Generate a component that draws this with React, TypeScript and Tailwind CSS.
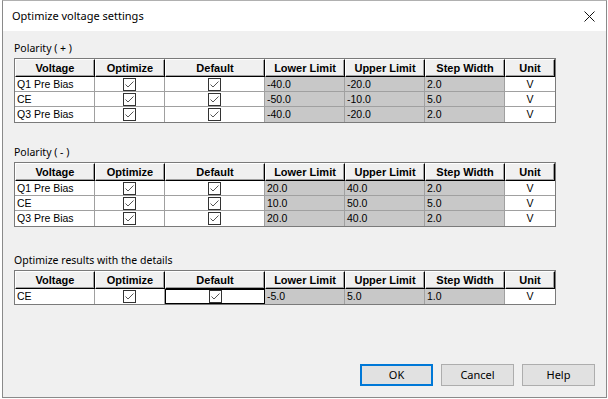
import React from "react";

type Row = { name: string; lower: string; upper: string; step: string; editing?: boolean };

const positive: Row[] = [
  { name: "Q1 Pre Bias", lower: "-40.0", upper: "-20.0", step: "2.0" },
  { name: "CE", lower: "-50.0", upper: "-10.0", step: "5.0" },
  { name: "Q3 Pre Bias", lower: "-40.0", upper: "-20.0", step: "2.0" },
];

const negative: Row[] = [
  { name: "Q1 Pre Bias", lower: "20.0", upper: "40.0", step: "2.0" },
  { name: "CE", lower: "10.0", upper: "50.0", step: "5.0" },
  { name: "Q3 Pre Bias", lower: "20.0", upper: "40.0", step: "2.0" },
];

const details: Row[] = [{ name: "CE", lower: "-5.0", upper: "5.0", step: "1.0", editing: true }];

const headers = ["Voltage", "Optimize", "Default", "Lower Limit", "Upper Limit", "Step Width", "Unit"];

function CheckBox() {
  return (
    <svg width="13" height="13" viewBox="0 0 13 13" className="block">
      <rect x="0.5" y="0.5" width="12" height="12" fill="#fff" stroke="#333" />
      <polyline points="2.5,6.5 5,9 10.5,3.5" fill="none" stroke="#555" strokeWidth="1" />
    </svg>
  );
}

function Grid({ rows }: { rows: Row[] }) {
  const base = "h-[15px] text-[10.5px] leading-[14px] whitespace-nowrap overflow-hidden";
  const line = "border-r border-b border-[#a0a0a0]";
  return (
    <div className="w-[542px] border border-[#7a7a7a] bg-white">
      <div className="grid grid-cols-[80px_70px_100px_80px_80px_80px_50px]">
        {headers.map((h) => (
          <div
            key={h}
            className="flex h-[18px] items-center justify-center border-l border-t border-r border-b border-l-white border-t-white border-r-black border-b-black bg-[#f0f0f0] text-[11px] font-bold shadow-[inset_-1px_-1px_0_#a0a0a0]"
          >
            {h}
          </div>
        ))}
        {rows.map((r, i) => {
          const last = i === rows.length - 1 ? " border-b-0 h-[14px]" : "";
          const cell = `${base} ${line}${last}`;
          return (
            <React.Fragment key={r.name + i}>
              <div className={`${cell} pl-[2px]`}>{r.name}</div>
              <div className={`${cell} flex items-center justify-center`}>
                <CheckBox />
              </div>
              {r.editing ? (
                <div className={`${base} flex items-center justify-center border border-black`}>
                  <CheckBox />
                </div>
              ) : (
                <div className={`${cell} flex items-center justify-center`}>
                  <CheckBox />
                </div>
              )}
              <div className={`${cell} bg-[#c8c8c8] pl-[2px]`}>{r.lower}</div>
              <div className={`${cell} bg-[#c8c8c8] pl-[2px]`}>{r.upper}</div>
              <div className={`${cell} bg-[#c8c8c8] pl-[2px]`}>{r.step}</div>
              <div className={`${cell} flex justify-center border-r-0`}>V</div>
            </React.Fragment>
          );
        })}
      </div>
    </div>
  );
}

export default function App() {
  const label = "h-[16px] font-['Noto_Sans',sans-serif] text-[10.5px] leading-[16px]";
  const button = "h-[22px] w-[73px] bg-[#e1e1e1] font-['Noto_Sans',sans-serif] text-[11px]";
  return (
    <div className="h-[399px] w-[608px] overflow-hidden bg-white font-['Liberation_Sans',Arial,sans-serif] text-black">
      <div className="ml-[2px] flex h-[398px] w-[605px] flex-col border border-[#8a8a8a] border-t-[#b0b0b0]">
        <div className="flex h-[30px] shrink-0 items-center justify-between bg-white pl-[9px] pr-[11px]">
          <span className="font-['Noto_Sans',sans-serif] text-[11px]">Optimize voltage settings</span>
          <svg width="11" height="11" viewBox="0 0 11 11">
            <path d="M0.5 0.5 L10.5 10.5 M10.5 0.5 L0.5 10.5" stroke="#111" strokeWidth="1" />
          </svg>
        </div>
        <div className="flex flex-1 flex-col bg-[#f0f0f0] pl-[11px] pt-[9px]">
          <p className={label}>Polarity ( + )</p>
          <div className="mt-[2px]">
            <Grid rows={positive} />
          </div>
          <p className={`${label} mt-[21px]`}>Polarity ( - )</p>
          <div className="mt-[2px]">
            <Grid rows={negative} />
          </div>
          <p className={`${label} mt-[25px]`}>Optimize results with the details</p>
          <div className="mt-[2px]">
            <Grid rows={details} />
          </div>
          <div className="mt-auto mb-[11px] flex justify-end gap-[8px] pr-[11px]">
            <button className={`${button} border-2 border-[#0078d7]`}>OK</button>
            <button className={`${button} border border-[#adadad]`}>Cancel</button>
            <button className={`${button} border border-[#adadad]`}>Help</button>
          </div>
        </div>
      </div>
    </div>
  );
}
